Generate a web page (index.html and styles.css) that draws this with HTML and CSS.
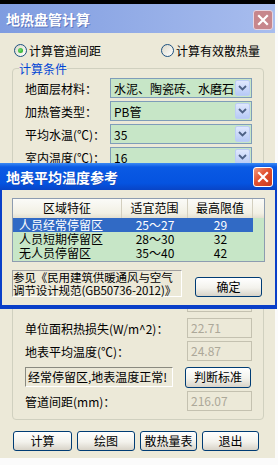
FILE: index.html
```html
<!DOCTYPE html>
<html lang="zh-CN">
<head>
    <meta charset="UTF-8">
    <meta name="viewport" content="width=device-width, initial-scale=1.0">
    <title>地热盘管计算</title>
    <link rel="stylesheet" href="styles.css">
</head>
<body>
    <div class="top-strip"></div>

    <div class="window">
        <div class="titlebar">
            <span class="title">地热盘管计算</span>
            <span class="close-btn inactive">
                <svg width="12" height="12" viewBox="0 0 12 12"><path d="M2 2 L10 10 M10 2 L2 10" stroke="#fff" stroke-width="2.2" stroke-linecap="square"/></svg>
            </span>
        </div>

        <div class="win-body">
            <div class="mode-row">
                <div class="radio checked"><span class="radio-dot"></span>计算管道间距</div>
                <div class="radio"><span class="radio-dot"></span>计算有效散热量</div>
            </div>

            <fieldset class="group">
                <legend>计算条件</legend>

                <div class="row">
                    <span class="label">地面层材料：</span>
                    <div class="combo"><span class="combo-text">水泥、陶瓷砖、水磨石</span><span class="drop"><svg width="9" height="6" viewBox="0 0 9 6"><path d="M1 1 L4.5 4.5 L8 1" fill="none" stroke="#4d6185" stroke-width="1.8"/></svg></span></div>
                </div>
                <div class="row">
                    <span class="label">加热管类型：</span>
                    <div class="combo"><span class="combo-text">PB管</span><span class="drop"><svg width="9" height="6" viewBox="0 0 9 6"><path d="M1 1 L4.5 4.5 L8 1" fill="none" stroke="#4d6185" stroke-width="1.8"/></svg></span></div>
                </div>
                <div class="row">
                    <span class="label">平均水温(℃)：</span>
                    <div class="combo"><span class="combo-text">35</span><span class="drop"><svg width="9" height="6" viewBox="0 0 9 6"><path d="M1 1 L4.5 4.5 L8 1" fill="none" stroke="#4d6185" stroke-width="1.8"/></svg></span></div>
                </div>
                <div class="row">
                    <span class="label">室内温度(℃)：</span>
                    <div class="combo"><span class="combo-text">16</span><span class="drop"><svg width="9" height="6" viewBox="0 0 9 6"><path d="M1 1 L4.5 4.5 L8 1" fill="none" stroke="#4d6185" stroke-width="1.8"/></svg></span></div>
                </div>

                <!-- 被参考窗口遮住的部分 -->
                <div class="covered"></div>

                <div class="row">
                    <span class="field"></span>
                </div>
                <div class="row after-gap">
                    <span class="label">单位面积热损失(W/m^2)：</span>
                    <span class="field">22.71</span>
                </div>
                <div class="row">
                    <span class="label">地表平均温度(℃)：</span>
                    <span class="field">24.87</span>
                </div>
                <div class="status-row">
                    <span class="status">经常停留区,地表温度正常!</span>
                    <button class="btn judge">判断标准</button>
                </div>
                <div class="row">
                    <span class="label">管道间距(mm)：</span>
                    <span class="field">216.07</span>
                </div>
            </fieldset>

            <div class="buttons">
                <button class="btn w59">计算</button>
                <button class="btn w58">绘图</button>
                <button class="btn w57">散热量表</button>
                <button class="btn w57">退出</button>
            </div>
        </div>
    </div>

    <div class="dialog">
        <div class="dlg-title">
            <span class="title">地表平均温度参考</span>
            <span class="close-btn active">
                <svg width="12" height="12" viewBox="0 0 12 12"><path d="M2 2 L10 10 M10 2 L2 10" stroke="#fff" stroke-width="2.2" stroke-linecap="square"/></svg>
            </span>
        </div>
        <div class="dlg-body">
            <div class="list">
                <div class="list-head">
                    <span>区域特征</span>
                    <span>适宜范围</span>
                    <span>最高限值</span>
                    <span class="blank"></span>
                </div>
                <div class="list-row selected"><span class="c1">人员经常停留区</span><span>25～27</span><span>29</span></div>
                <div class="list-row"><span class="c1">人员短期停留区</span><span>28～30</span><span>32</span></div>
                <div class="list-row"><span class="c1">无人员停留区</span><span>35～40</span><span>42</span></div>
            </div>
            <div class="ref-row">
                <div class="ref-note">参见《民用建筑供暖通风与空气<br>调节设计规范(GB50736-2012)》</div>
                <button class="btn ok">确定</button>
            </div>
        </div>
    </div>
</body>
</html>
```

FILE: styles.css
```css
body {
    margin: 0;
    width: 278px;
    height: 465px;
    overflow: hidden;
    position: relative;
    background: #fbfbfb;
    font-family: "Noto Sans CJK SC", sans-serif;
    font-size: 12px;
    color: #000;
}
.top-strip {
    width: 275px;
    height: 4px;
    background: #000;
}
.window {
    width: 275px;
    background: #ece9d8;
}
.titlebar {
    height: 29px;
    display: flex;
    align-items: center;
    justify-content: space-between;
    padding: 0 2px 0 6px;
    background: linear-gradient(to right, #7f9ce0, #a8bdee);
}
.title {
    color: #fff;
    font-size: 14px;
    font-weight: bold;
    text-shadow: 1px 1px 0 rgba(40, 60, 140, 0.45);
}
.close-btn {
    width: 20px;
    height: 20px;
    box-sizing: border-box;
    border-radius: 3px;
    border: 1px solid #fff;
    display: flex;
    align-items: center;
    justify-content: center;
}
.close-btn.inactive {
    margin-top: 3px;
    background: #c7868c;
    border-color: #e6d6e2;
}
.close-btn.active {
    background: linear-gradient(135deg, #f29c7f, #e2502f 45%, #c73a1d);
}
.win-body {
    padding: 9px 0 7px 0;
}
.mode-row {
    display: flex;
    align-items: center;
    height: 16px;
    padding-left: 14px;
}
.radio {
    display: flex;
    align-items: center;
    gap: 2px;
}
.radio:first-child {
    width: 147px;
}
.radio-dot {
    position: relative;
    width: 13px;
    height: 13px;
    box-sizing: border-box;
    border-radius: 50%;
    border: 1px solid #1c5180;
    background: linear-gradient(135deg, #dcd9c8, #fff);
}
.radio.checked .radio-dot::after {
    content: '';
    position: absolute;
    left: 3px;
    top: 3px;
    width: 5px;
    height: 5px;
    border-radius: 50%;
    background: radial-gradient(circle at 40% 40%, #6ee06e, #1a9a1a);
}
.group {
    margin: 4px 11px 0 12px;
    padding: 0 6px 8px 6px;
    border: 1px solid #d0d0bf;
    border-radius: 4px;
    min-width: 0;
}
.group legend {
    padding: 0;
    color: #0046d5;
    line-height: 13px;
}
.covered {
    height: 122px;
}
.row {
    display: flex;
    align-items: center;
    height: 20px;
    margin-top: 3px;
    padding: 0 5px 0 6px;
}
.row.after-gap {
    margin-top: 6px;
}
.label {
    flex: none;
    white-space: nowrap;
}
.combo {
    margin-left: auto;
    width: 142px;
    height: 20px;
    box-sizing: border-box;
    border: 1px solid #7f9db9;
    background: #c7e6c7;
    display: flex;
    align-items: center;
    padding: 0 1px 0 3px;
}
.combo-text {
    flex: 1;
    overflow: hidden;
    white-space: nowrap;
}
.drop {
    width: 15px;
    height: 16px;
    box-sizing: border-box;
    border-radius: 2px;
    border: 1px solid #bccdf5;
    background: linear-gradient(#e0e8fd, #b7caf6);
    display: flex;
    align-items: center;
    justify-content: center;
}
.field {
    margin-left: auto;
    width: 65px;
    height: 20px;
    box-sizing: border-box;
    border: 1px solid #c4c1b0;
    color: #aca899;
    padding: 0 3px;
    line-height: 18px;
}
.status-row {
    display: flex;
    align-items: center;
    height: 22px;
    margin: 5px 0 2px 0;
    padding: 0 6px 0 6px;
}
.status {
    width: 148px;
    height: 20px;
    box-sizing: border-box;
    border: 1px solid;
    border-color: #8a8a80 #fff #fff #8a8a80;
    line-height: 18px;
    padding-left: 2px;
    white-space: nowrap;
}
.btn {
    height: 20px;
    box-sizing: border-box;
    border: 1px solid #003c74;
    border-radius: 3px;
    background: linear-gradient(#fff, #f3f2ec 55%, #d8d3c8);
    font-family: "Noto Sans CJK SC", sans-serif;
    font-size: 12px;
    color: #000;
    padding: 0;
    line-height: 18px;
}
.btn.judge {
    margin-left: auto;
    width: 66px;
    height: 21px;
}
.buttons {
    display: flex;
    gap: 5px;
    padding-left: 13px;
    margin-top: 11px;
}
.btn.w59 { width: 59px; }
.btn.w58 { width: 58px; }
.btn.w57 { width: 57px; }
.dialog {
    position: absolute;
    left: 0;
    top: 163px;
    width: 277px;
}
.dlg-title {
    height: 27px;
    display: flex;
    align-items: center;
    justify-content: space-between;
    padding: 0 4px 0 6px;
    background: linear-gradient(#3b8af5, #0a5ae4 15%, #0553e0 75%, #0844c6);
}
.dlg-body {
    background: #ece9d8;
    border: solid #0a3fc8;
    border-width: 0 2px 4px 2px;
    padding: 8px 10px 8px 10px;
}
.list {
    height: 64px;
    box-sizing: border-box;
    border: 1px solid #8d9cb0;
    background: #c7e6c7;
}
.list-head {
    display: grid;
    grid-template-columns: 109px 66px 65px 1fr;
    height: 19px;
    background: linear-gradient(#fbfbf8, #f2f0e4 75%, #e3dfd0);
}
.list-head span {
    text-align: center;
    line-height: 18px;
    border-right: 1px solid #d3cfbf;
}
.list-head .blank {
    border-right: none;
}
.list-row {
    display: grid;
    grid-template-columns: 109px 66px 65px;
    width: 240px;
    height: 14px;
    line-height: 14px;
}
.list-row span {
    text-align: center;
}
.list-row .c1 {
    text-align: left;
    padding-left: 6px;
}
.list-row.selected {
    background: #316ac5;
    color: #fff;
}
.ref-row {
    display: flex;
    align-items: flex-end;
    justify-content: space-between;
    margin-top: 8px;
}
.ref-note {
    width: 170px;
    height: 27px;
    box-sizing: border-box;
    border: 1px solid;
    border-color: #a0a0a0 #fff #fff #a0a0a0;
    font-size: 11.5px;
    line-height: 12.5px;
    letter-spacing: -0.1px;
    white-space: nowrap;
}
.btn.ok {
    width: 67px;
    margin-right: 3px;
}
```
